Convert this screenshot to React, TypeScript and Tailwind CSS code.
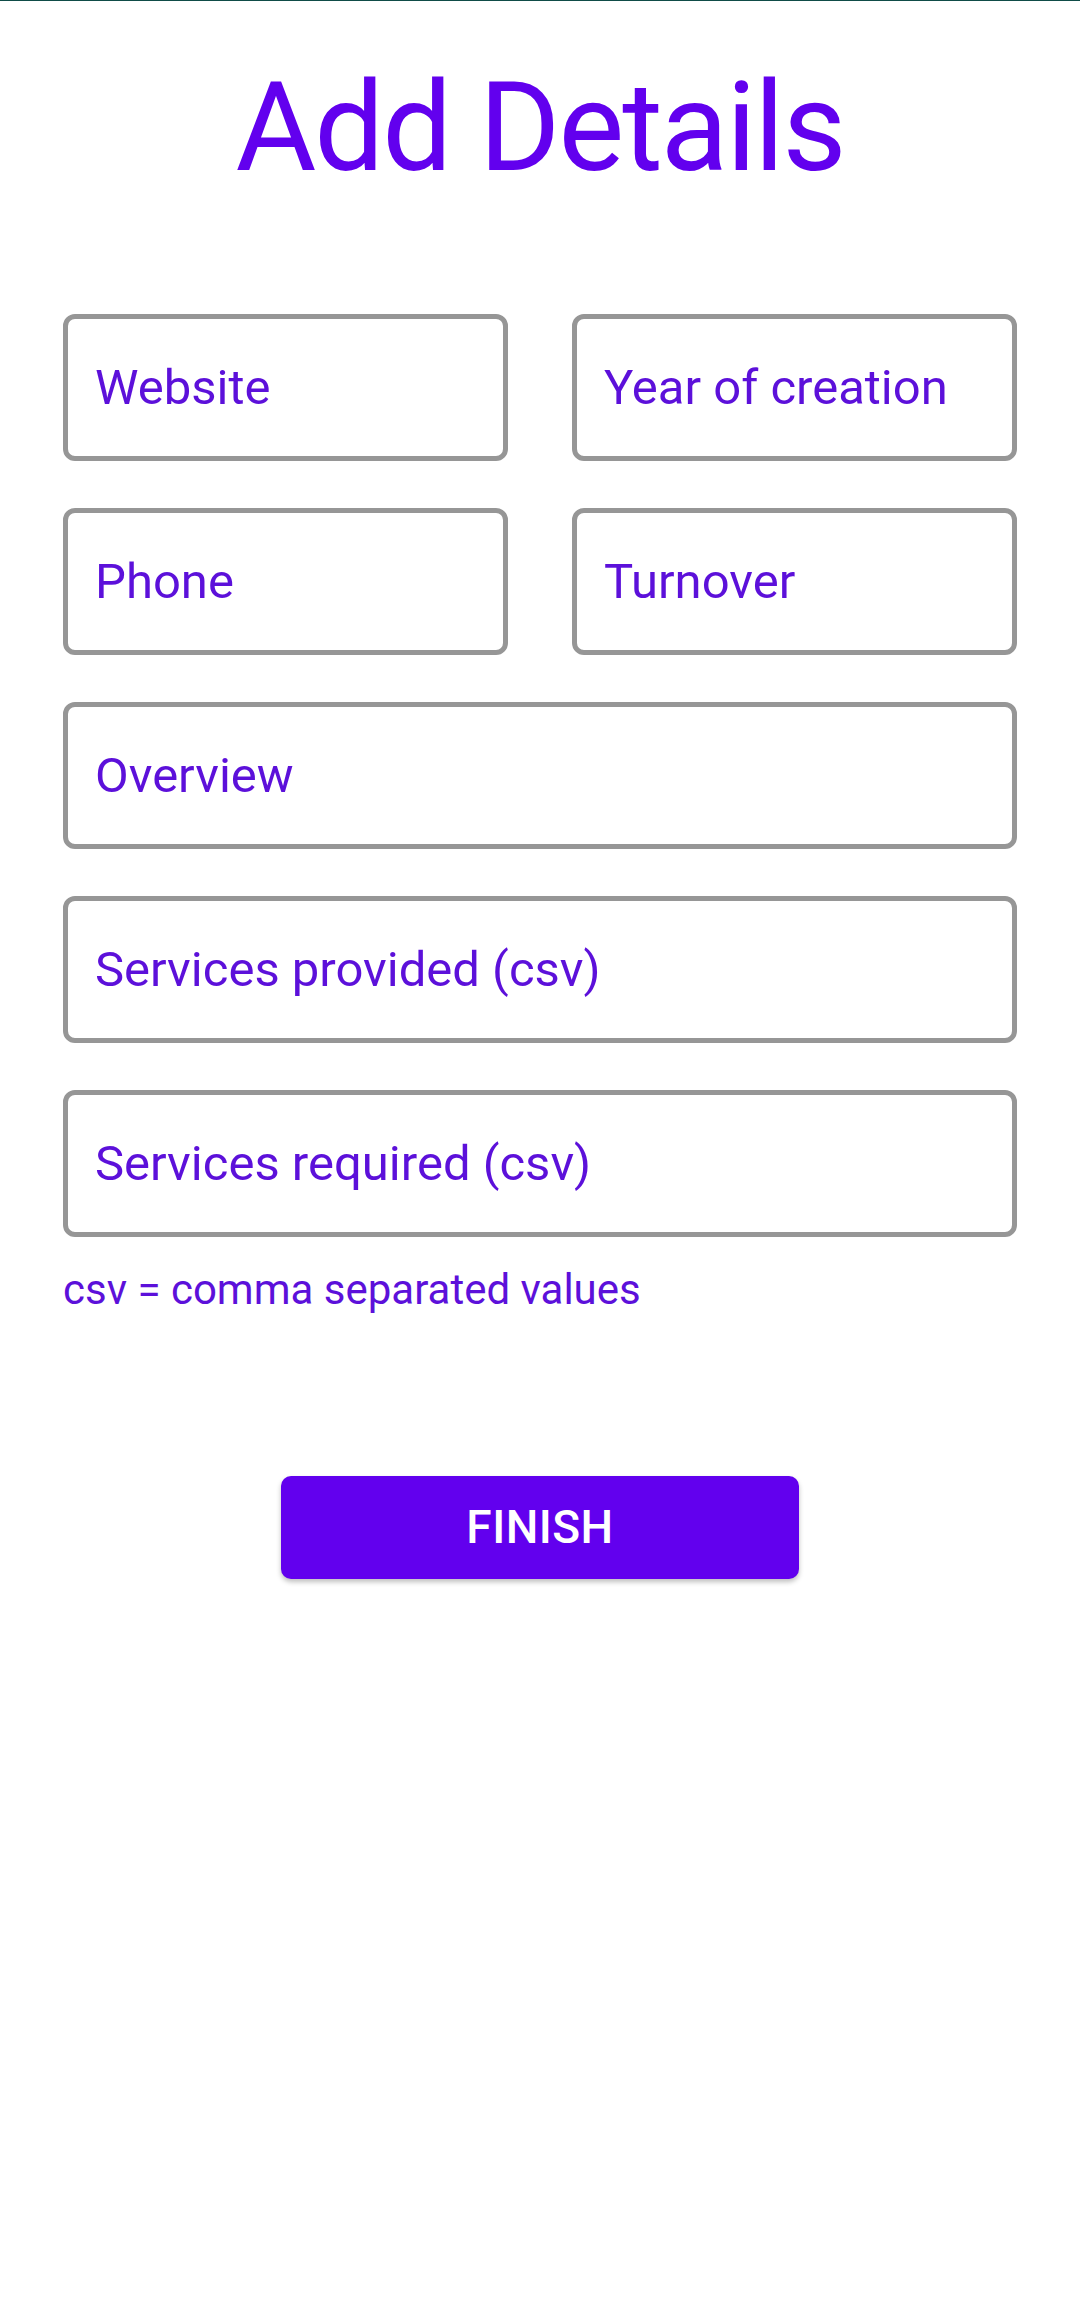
import React from "react";

const font = { fontFamily: "Roboto, 'Noto Sans', sans-serif" };

function Field({ label, full }: { label: string; full?: boolean }) {
  return (
    <div
      className={`${full ? "col-span-2" : ""} h-[147px] border-[5px] border-[#969696] rounded-[12px] flex items-center pl-[27px] bg-white`}
    >
      <span className="text-[49px] leading-none text-[#5c10da]">{label}</span>
    </div>
  );
}

export default function App() {
  return (
    <div className="w-full min-h-[2313px] bg-white border-t border-[#0f4c47]" style={font}>
      <h1 className="pt-[65px] text-center text-[124px] leading-none text-[#6200ee] tracking-[-0.016em]">
        Add Details
      </h1>
      <div className="mt-[124px] px-[63px]">
        <div className="grid grid-cols-2 gap-x-[64px] gap-y-[47px]">
          <Field label="Website" />
          <Field label="Year of creation" />
          <Field label="Phone" />
          <Field label="Turnover" />
          <Field label="Overview" full />
          <Field label="Services provided (csv)" full />
          <Field label="Services required (csv)" full />
        </div>
        <p className="mt-[32px] text-[42px] leading-none text-[#5c10da]">csv = comma separated values</p>
      </div>
      <div className="mt-[165px] flex justify-center">
        <button className="w-[518px] h-[103px] rounded-[10px] bg-[#6200ee] text-white text-[46px] font-medium tracking-[0.01em] shadow-[0_3px_5px_rgba(0,0,0,0.25)]">
          FINISH
        </button>
      </div>
    </div>
  );
}
